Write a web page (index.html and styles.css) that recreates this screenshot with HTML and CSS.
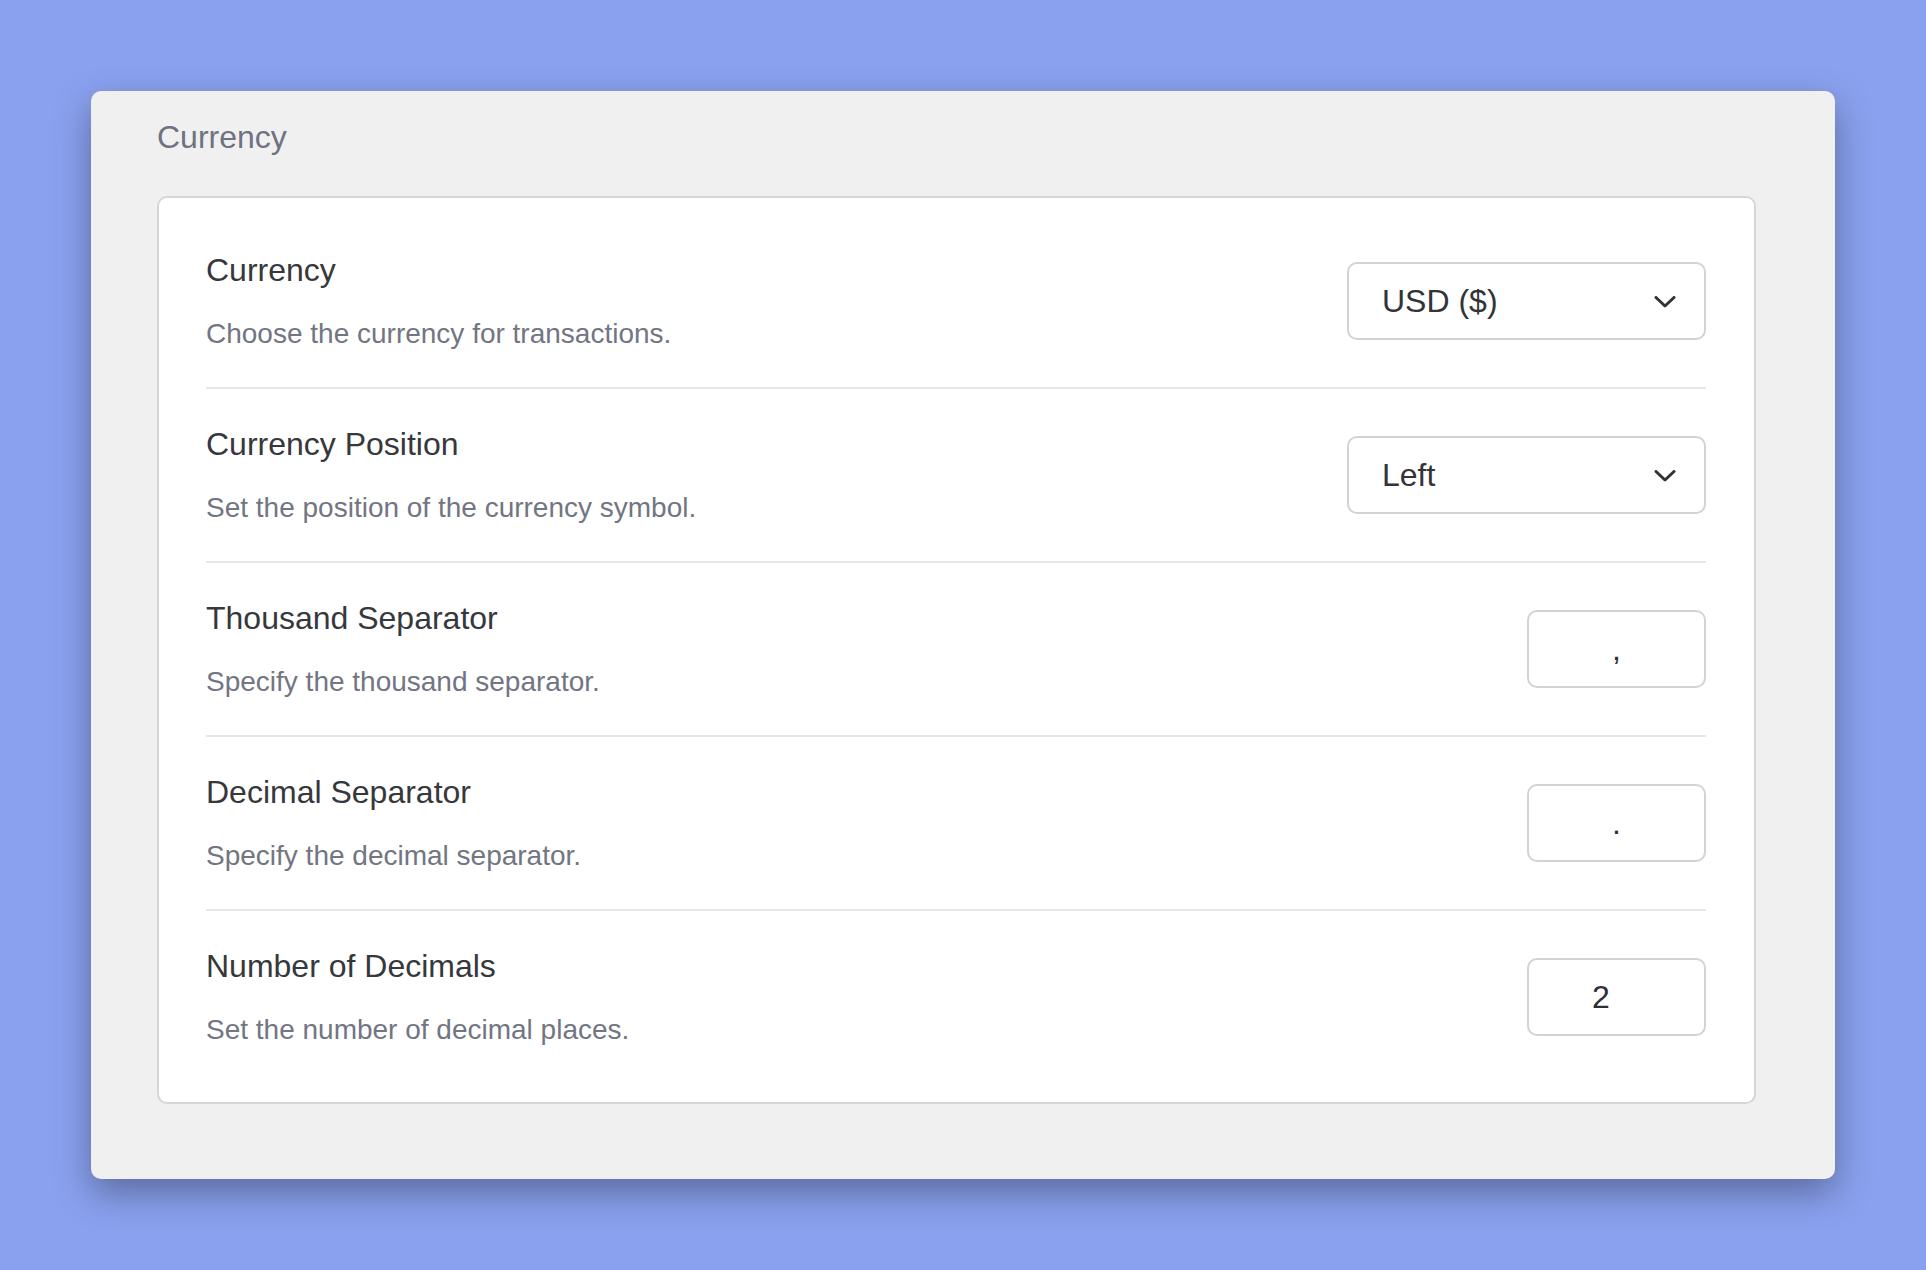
FILE: index.html
```html
<!DOCTYPE html>
<html lang="en">
<head>
<meta charset="utf-8">
<title>Currency Settings</title>
<link rel="stylesheet" href="styles.css">
</head>
<body>
<main class="panel">
  <h2 class="panel-title">Currency</h2>
  <section class="settings-card">
    <div class="setting-row">
      <div class="setting-text">
        <div class="setting-name">Currency</div>
        <div class="setting-desc">Choose the currency for transactions.</div>
      </div>
      <div class="select">
        <span class="select-value">USD ($)</span>
        <svg class="chevron" viewBox="0 0 22 12" width="22" height="12" aria-hidden="true"><path d="M2 1.5 L11 10 L20 1.5" fill="none" stroke="#333" stroke-width="3" stroke-linecap="round" stroke-linejoin="round"/></svg>
      </div>
    </div>
    <div class="setting-row">
      <div class="setting-text">
        <div class="setting-name">Currency Position</div>
        <div class="setting-desc">Set the position of the currency symbol.</div>
      </div>
      <div class="select">
        <span class="select-value">Left</span>
        <svg class="chevron" viewBox="0 0 22 12" width="22" height="12" aria-hidden="true"><path d="M2 1.5 L11 10 L20 1.5" fill="none" stroke="#333" stroke-width="3" stroke-linecap="round" stroke-linejoin="round"/></svg>
      </div>
    </div>
    <div class="setting-row">
      <div class="setting-text">
        <div class="setting-name">Thousand Separator</div>
        <div class="setting-desc">Specify the thousand separator.</div>
      </div>
      <input class="field" type="text" value=",">
    </div>
    <div class="setting-row">
      <div class="setting-text">
        <div class="setting-name">Decimal Separator</div>
        <div class="setting-desc">Specify the decimal separator.</div>
      </div>
      <input class="field" type="text" value=".">
    </div>
    <div class="setting-row">
      <div class="setting-text">
        <div class="setting-name">Number of Decimals</div>
        <div class="setting-desc">Set the number of decimal places.</div>
      </div>
      <input class="field field-number" type="text" value="2">
    </div>
  </section>
</main>
</body>
</html>
```

FILE: styles.css
```css
html, body {
  margin: 0;
  padding: 0;
}

body {
  background: #8aa1ef;
  font-family: "Liberation Sans", Arial, Helvetica, sans-serif;
  height: 1270px;
  box-sizing: border-box;
  padding: 91px;
  display: flex;
}

.panel {
  flex: 1;
  background: #f0f0f0;
  border-radius: 10px;
  box-shadow: 0 14px 36px rgba(0, 0, 0, 0.34);
  padding: 26px 79px 0 66px;
}

.panel-title {
  margin: 0 0 39px 0;
  font-size: 32px;
  line-height: 40px;
  font-weight: 400;
  color: #6f7280;
}

.settings-card {
  background: #ffffff;
  border: 2px solid #d6d6d6;
  border-radius: 10px;
  padding: 17px 48px 19px 47px;
}

.setting-row {
  display: flex;
  align-items: center;
  justify-content: space-between;
  padding: 35px 0;
  border-bottom: 2px solid #e6e6e6;
}

.setting-row:last-child {
  border-bottom: none;
}

.setting-name {
  font-size: 32px;
  line-height: 40px;
  color: #36383c;
}

.setting-desc {
  margin-top: 26px;
  font-size: 28px;
  line-height: 36px;
  color: #727582;
}

.select {
  box-sizing: border-box;
  width: 359px;
  height: 78px;
  border: 2px solid #d3d3d3;
  border-radius: 10px;
  background: #fff;
  display: flex;
  align-items: center;
  justify-content: space-between;
  padding: 0 28px 0 33px;
}

.select-value {
  font-size: 32px;
  color: #333438;
}

.chevron {
  display: block;
  margin-top: 2px;
}

.field {
  box-sizing: border-box;
  width: 179px;
  height: 78px;
  border: 2px solid #d3d3d3;
  border-radius: 10px;
  background: #fff;
  font-family: "Liberation Sans", Arial, Helvetica, sans-serif;
  font-size: 32px;
  color: #2e2f33;
  text-align: center;
  padding: 0;
  margin: 0;
  outline: none;
}

.field-number {
  padding-right: 31px;
}
```
